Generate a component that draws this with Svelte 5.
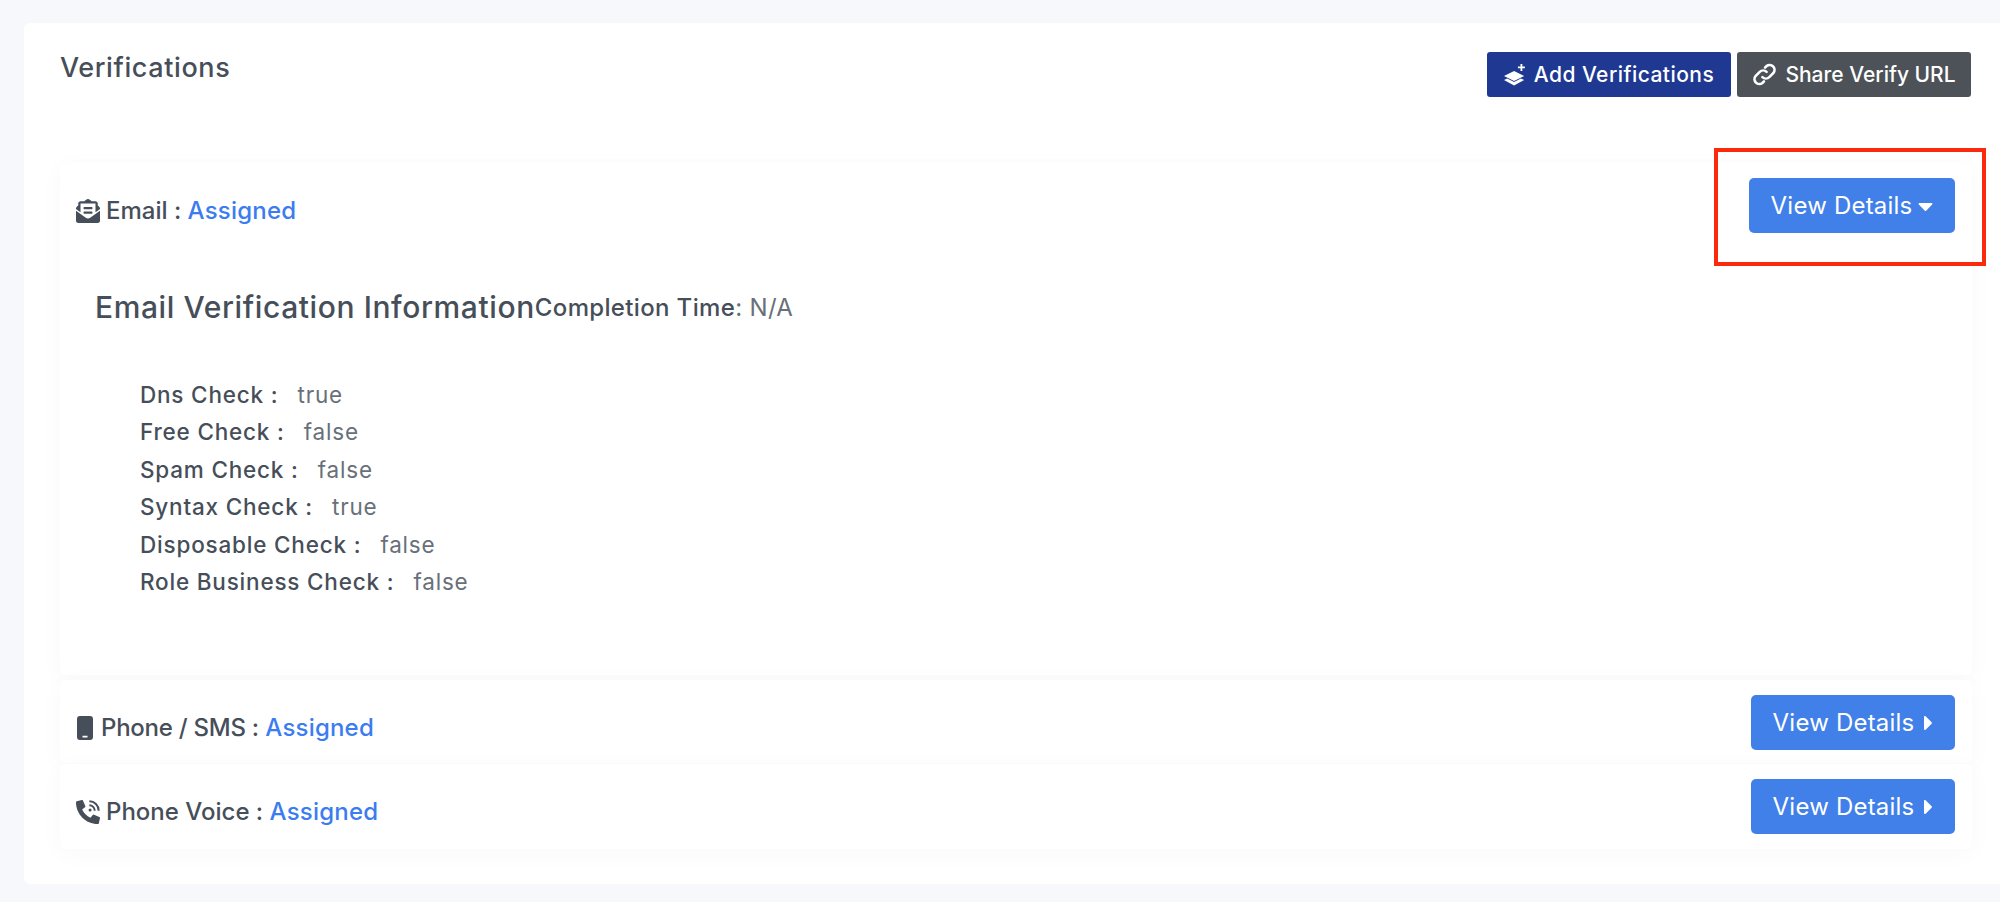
<script>
  const checks = [
    ["Dns Check", "true"],
    ["Free Check", "false"],
    ["Spam Check", "false"],
    ["Syntax Check", "true"],
    ["Disposable Check", "false"],
    ["Role Business Check", "false"]
  ];
</script>

{#snippet caretRight()}
  <svg class="caret-right" viewBox="0 0 192 512"><path fill="currentColor" d="M0 384.662V127.338c0-17.818 21.543-26.741 34.142-14.142l128.662 128.662c7.810 7.810 7.810 20.474 0 28.284L34.142 398.804C21.543 411.404 0 402.480 0 384.662z"/></svg>
{/snippet}

<div class="page">
  <div class="card">
    <div class="head">
      <h4>Verifications</h4>
      <div class="actions">
        <button class="btn navy">
          <svg class="ic-add" viewBox="0 0 24 24"><path d="M11 7.500 0 13l11 5.500L22 13zM3.500 15.700 0 17.500 11 23.500l11-6-3.500-1.800-7.500 3.800z" fill="currentColor"/><path d="M19 0v7.500M15.200 3.700h7.600" stroke="currentColor" stroke-width="2" fill="none"/></svg>
          <span class="add-text">Add Verifications</span>
        </button>
        <button class="btn slate">
          <svg class="ic-link" viewBox="0 0 24 24" fill="none" stroke="currentColor" stroke-width="2.500" stroke-linecap="round"><path d="M10 14.500a4.700 4.700 0 0 0 6.600 0l4-4a4.700 4.700 0 0 0-6.600-6.600l-1.500 1.500"/><path d="M14 9.500a4.700 4.700 0 0 0-6.600 0l-4 4a4.700 4.700 0 0 0 6.600 6.600l1.500-1.500"/></svg>
          Share Verify URL
        </button>
      </div>
    </div>

    <div class="row open">
      <div class="row-top">
        <div class="label">
          <svg class="ic-wide" viewBox="0 0 512 512"><path fill="currentColor" d="M176 216h160c8.840 0 16-7.160 16-16v-16c0-8.840-7.160-16-16-16H176c-8.840 0-16 7.160-16 16v16c0 8.840 7.160 16 16 16zm-16 80c0 8.840 7.160 16 16 16h160c8.840 0 16-7.160 16-16v-16c0-8.840-7.160-16-16-16H176c-8.840 0-16 7.160-16 16v16zm96 121.130c-16.420 0-32.840-5.060-46.860-15.190L0 250.860V464c0 26.510 21.490 48 48 48h416c26.510 0 48-21.490 48-48V250.860L302.860 401.940c-14.020 10.120-30.440 15.190-46.860 15.190zm237.610-254.180c-8.850-6.940-17.240-13.470-29.610-22.810V96c0-26.510-21.490-48-48-48h-77.550c-3.040-2.200-5.870-4.260-9.040-6.560C312.600 29.170 279.200-.35 256 0c-23.200-.35-56.590 29.170-73.410 41.440-3.170 2.300-6 4.360-9.040 6.560H96c-26.510 0-48 21.490-48 48v44.140c-12.370 9.330-20.760 15.870-29.610 22.810A47.995 47.995 0 0 0 0 200.720v10.650l96 69.350V96h320v184.720l96-69.350v-10.650c0-14.740-6.780-28.670-18.390-37.770z"/></svg>
          <span>Email : <span class="assigned">Assigned</span></span>
        </div>
        <button class="btn blue open-btn">
          View Details
          <svg class="caret-down" viewBox="0 0 320 512"><path fill="currentColor" d="M31.300 192h257.300c17.800 0 26.700 21.500 14.100 34.100L174.100 354.800c-7.800 7.800-20.500 7.800-28.300 0L17.200 226.100C4.600 213.500 13.500 192 31.300 192z"/></svg>
        </button>
        <span class="callout"></span>
      </div>
      <div class="info">
        <div class="info-head">
          <h5>Email Verification Information</h5>
          <div class="time"><b>Completion Time</b>: N/A</div>
        </div>
        <ul>
          {#each checks as [name, value]}
            <li><b>{name} :</b> <span>{value}</span></li>
          {/each}
        </ul>
      </div>
    </div>

    <div class="row">
      <div class="row-top">
        <div class="label phone">
          <svg class="ic-phone" viewBox="0 0 16 24"><path d="M3 0h10a3 3 0 0 1 3 3v18a3 3 0 0 1-3 3H3a3 3 0 0 1-3-3V3a3 3 0 0 1 3-3zm2.500 19.800v1.700h5v-1.700z" fill="currentColor" fill-rule="evenodd"/></svg>
          <span><span class="tight">Phone / SMS :</span> <span class="assigned">Assigned</span></span>
        </div>
        <button class="btn blue">View Details {@render caretRight()}</button>
      </div>
    </div>

    <div class="row last">
      <div class="row-top">
        <div class="label">
          <svg class="ic-wide" viewBox="0 0 512 512"><path fill="currentColor" d="M497.390 361.800l-112-48a24 24 0 0 0-28 6.900l-49.600 60.600A370.660 370.660 0 0 1 130.600 204.110l60.600-49.600a23.940 23.940 0 0 0 6.900-28l-48-112A24.160 24.160 0 0 0 122.600.61l-104 24A24 24 0 0 0 0 48c0 256.500 207.900 464 464 464a24 24 0 0 0 23.400-18.600l24-104a24.290 24.290 0 0 0-14.010-27.600z"/><path d="M285 112a115 115 0 0 1 115 115M285 28a199 199 0 0 1 199 199" stroke="currentColor" stroke-width="42" fill="none"/><circle cx="300" cy="212" r="32" fill="currentColor"/></svg>
          <span>Phone Voice : <span class="assigned">Assigned</span></span>
        </div>
        <button class="btn blue">View Details {@render caretRight()}</button>
      </div>
    </div>
  </div>
</div>

<style>
  :global(body) {
    background: #f6f8fc;
    font-family: "Inter", "Open Sans", sans-serif;
    color: #464e59;
  }
  .page {
    padding: 23px 0 0 24px;
    height: 861px;
    overflow: hidden;
  }
  .card {
    background: #fff;
    border-radius: 6px 0 0 6px;
    padding: 0 28px 0 36px;
    width: 1976px;
    height: 861px;
    box-sizing: border-box;
  }
  .head {
    display: flex;
    justify-content: space-between;
    align-items: flex-start;
    height: 140px;
  }
  h4 {
    margin: 28px 0 0;
    font-size: 27px;
    font-weight: 500;
    letter-spacing: 0.6px;
  }
  .actions {
    display: flex;
    gap: 6px;
    margin-top: 29px;
    padding-right: 1px;
  }
  .btn {
    display: inline-flex;
    align-items: center;
    justify-content: center;
    border: 0;
    padding: 0;
    color: #fff;
    font: 500 21px "Inter", sans-serif;
    height: 45px;
    border-radius: 3px;
  }
  .navy { background: #1f3993; width: 244px; gap: 8px; }
  .add-text { letter-spacing: 0.45px; }
  .slate { background: #4c5258; width: 234px; gap: 8px; }
  .blue {
    background: #417fe9;
    height: 55px;
    width: 204px;
    border-radius: 5px;
    margin-top: 15px;
    font-size: 24px;
    font-weight: 400;
    letter-spacing: 0.2px;
    gap: 10px;
  }
  .open-btn { width: 206px; gap: 6px; }
  .ic-add { width: 22px; height: 24px; flex: none; }
  .ic-link { width: 25px; height: 25px; flex: none; }
  .ic-wide { width: 24px; height: 24px; flex: none; margin-left: -1px; }
  .ic-phone { width: 16px; height: 24px; flex: none; }
  .caret-right { width: 9px; height: 24px; flex: none; }
  .caret-down { width: 15px; height: 24px; flex: none; }
  .row {
    border-radius: 6px;
    background: #fff;
    box-shadow: 0 4px 24px rgba(40, 50, 90, 0.03);
    padding: 0 17px;
    margin-bottom: 1px;
  }
  .row.open { height: 512px; margin-bottom: 5px; }
  .row.last { height: 85px; margin-bottom: 0; }
  .row-top {
    position: relative;
    display: flex;
    justify-content: space-between;
    align-items: flex-start;
    height: 83px;
  }
  .label {
    display: flex;
    align-items: center;
    gap: 6px;
    margin-top: 34px;
    font-size: 24px;
    line-height: 28px;
    font-weight: 500;
    white-space: pre;
  }
  .phone { gap: 8px; }
  .tight { letter-spacing: -0.25px; }
  .assigned { color: #3b7df0; letter-spacing: 0.2px; }
  .callout {
    position: absolute;
    right: -31px;
    top: -15px;
    width: 272px;
    height: 118px;
    box-sizing: border-box;
    border: 4px solid #fb2a0c;
  }
  .info { padding-left: 18px; margin-top: 43px; }
  .info-head { display: flex; align-items: center; height: 36px; }
  h5 {
    margin: 0;
    font-size: 30px;
    font-weight: 500;
    letter-spacing: 0.6px;
  }
  .time { font-size: 24px; letter-spacing: 0.35px; color: #687079; }
  .time b { font-weight: 500; color: #464e59; }
  ul {
    list-style: none;
    margin: 51px 0 0;
    padding: 0 0 0 45px;
  }
  li {
    font-size: 22.500px;
    line-height: 37.400px;
    letter-spacing: 0.8px;
    color: #687079;
  }
  li b { font-weight: 500; color: #464e59; margin-right: 12px; }
</style>
